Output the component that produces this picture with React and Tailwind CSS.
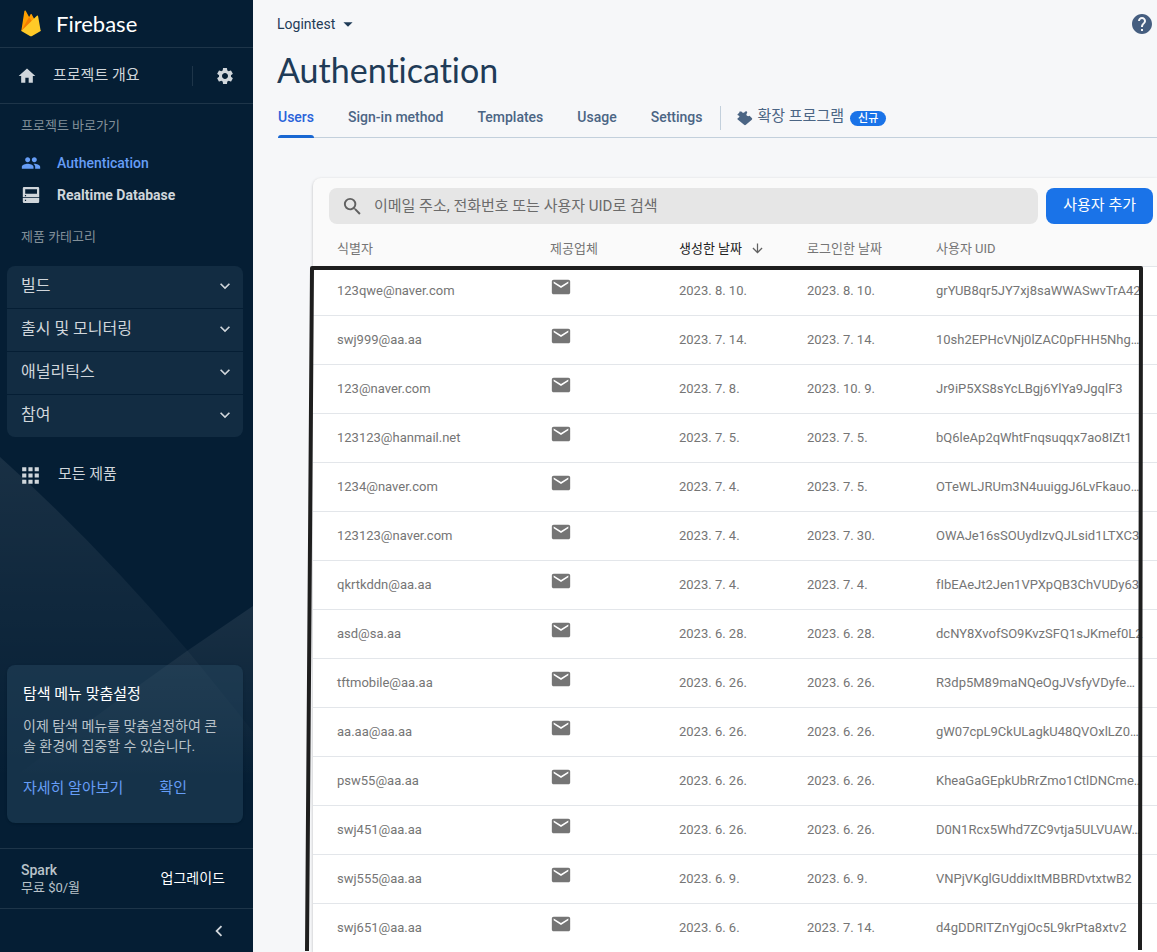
import React from "react";
import {
  MdHome, MdSettings, MdPeople, MdEmail, MdSearch, MdArrowDownward, MdHelp,
  MdArrowDropDown, MdExpandMore, MdApps, MdChevronLeft,
} from "react-icons/md";

const users = [
  ["123qwe@naver.com", "2023. 8. 10.", "2023. 8. 10.", "grYUB8qr5JY7xj8saWWASwvTrA42"],
  ["swj999@aa.aa", "2023. 7. 14.", "2023. 7. 14.", "10sh2EPHcVNj0lZAC0pFHH5Nhg…"],
  ["123@naver.com", "2023. 7. 8.", "2023. 10. 9.", "Jr9iP5XS8sYcLBgj6YlYa9JgqlF3"],
  ["123123@hanmail.net", "2023. 7. 5.", "2023. 7. 5.", "bQ6leAp2qWhtFnqsuqqx7ao8IZt1"],
  ["1234@naver.com", "2023. 7. 4.", "2023. 7. 5.", "OTeWLJRUm3N4uuiggJ6LvFkauo…"],
  ["123123@naver.com", "2023. 7. 4.", "2023. 7. 30.", "OWAJe16sSOUydIzvQJLsid1LTXC3"],
  ["qkrtkddn@aa.aa", "2023. 7. 4.", "2023. 7. 4.", "fIbEAeJt2Jen1VPXpQB3ChVUDy63"],
  ["asd@sa.aa", "2023. 6. 28.", "2023. 6. 28.", "dcNY8XvofSO9KvzSFQ1sJKmef0L2"],
  ["tftmobile@aa.aa", "2023. 6. 26.", "2023. 6. 26.", "R3dp5M89maNQeOgJVsfyVDyfe…"],
  ["aa.aa@aa.aa", "2023. 6. 26.", "2023. 6. 26.", "gW07cpL9CkULagkU48QVOxlLZ0…"],
  ["psw55@aa.aa", "2023. 6. 26.", "2023. 6. 26.", "KheaGaGEpkUbRrZmo1CtlDNCme…"],
  ["swj451@aa.aa", "2023. 6. 26.", "2023. 6. 26.", "D0N1Rcx5Whd7ZC9vtja5ULVUAW…"],
  ["swj555@aa.aa", "2023. 6. 9.", "2023. 6. 9.", "VNPjVKglGUddixItMBBRDvtxtwB2"],
  ["swj651@aa.aa", "2023. 6. 6.", "2023. 7. 14.", "d4gDDRITZnYgjOc5L9krPta8xtv2"],
];

const categories = ["빌드", "출시 및 모니터링", "애널리틱스", "참여"];
const tabs = ["Users", "Sign-in method", "Templates", "Usage", "Settings"];

function FirebaseLogo() {
  return (
    <svg viewBox="0 0 20 27" className="h-[27px] w-5" aria-hidden="true">
      <path d="M0.3 21 3.4 1c.1-.7 1-.8 1.3-.3l3.4 6.2L9.500 4.400c.3-.6 1-.6 1.300 0L19.700 21Z" fill="#ffa000" />
      <path d="M12 13 8.100 6.900 0.300 21Z" fill="#f57c00" />
      <path d="m0.300 21 15.600-15.200c.4-.4 1.100-.2 1.200.4L19.700 21l-8.600 5c-.7.400-1.500.400-2.200 0Z" fill="#ffca28" />
    </svg>
  );
}

function DatabaseIcon() {
  return (
    <svg viewBox="0 0 18 18" className="h-[18px] w-[18px]" aria-hidden="true">
      <path
        fillRule="evenodd"
        fill="currentColor"
        d="M2 1h14a1.200 1.200 0 0 1 1.200 1.200v9H0.800v-9A1.200 1.200 0 0 1 2 1ZM3.200 3.300v4.400h11.800V3.300ZM2.900 9v1.200h1.200V9ZM0.800 12h16.400v3.800a1.200 1.200 0 0 1-1.200 1.200H2a1.200 1.200 0 0 1-1.200-1.200ZM2.900 13.800v1.200h1.200v-1.200Z"
      />
    </svg>
  );
}

function PuzzleIcon() {
  return (
    <svg viewBox="0 0 16 16" className="h-4 w-4" aria-hidden="true">
      <path
        fill="currentColor"
        d="M2.600 1.600 4.200 1.400c.7 0 .8 1.200 1.700 1.400.9.200 1.600-.4 2-1 .5-.6 1.300-.8 1.900-.2.600.6.500 1.300 0 1.900-.6.800-.5 1.700.2 2.300.8.700 1.800.5 2.500 0l2.300 2.200c.6.500.6 1.200 0 1.700l-5.900 5.100c-.6.500-1.200.5-1.800 0L.700 9.600c-.5-.5-.4-1 .1-1.400.8-.6 1.500-.7 1.600-1.600.1-.9-.8-1-1.500-1.400-.6-.4-.5-1 0-1.300.8-.5 1.400-.6 1.700-2.300Z"
      />
    </svg>
  );
}

function SidebarArt() {
  return (
    <svg viewBox="0 0 253 392" preserveAspectRatio="none" className="absolute bottom-0 left-0 h-[392px] w-full" aria-hidden="true">
      <defs>
        <linearGradient id="fade" x1="0" y1="0" x2="0" y2="1">
          <stop offset="0" stopColor="#fff" stopOpacity=".08" />
          <stop offset="1" stopColor="#fff" stopOpacity="0" />
        </linearGradient>
      </defs>
      <path d="M0 1Q95 86 187 194Q225 240 253 276V325H0Z" fill="url(#fade)" />
      <path d="M253 150L187 195L110 250L0 332H253Z" fill="url(#fade)" />
    </svg>
  );
}

function Sidebar() {
  return (
    <nav className="relative flex w-[253px] shrink-0 flex-col bg-[#051e34] text-[#d0d6db]">
      <header className="flex h-12 items-center gap-[15px] border-b border-[#1e3549] pl-[21px]">
        <FirebaseLogo />
        <span className="font-[Lato] text-[22px] leading-7 text-white">Firebase</span>
      </header>
      <div className="flex h-14 items-center border-b border-[#1e3549] pl-[17px]">
        <a href="#overview" className="flex grow items-center gap-4">
          <MdHome size={20} />
          <span className="pb-0.5 text-[15px] leading-5">프로젝트 개요</span>
        </a>
        <button type="button" aria-label="설정" className="flex h-5 items-center border-l border-[#1e3549] pr-[18px] pl-[22px]">
          <MdSettings size={20} />
        </button>
      </div>
      <h2 className="mt-3 pl-[21px] text-[13px] leading-5 text-[#829099]">프로젝트 바로가기</h2>
      <div className="mt-[11px] flex flex-col text-sm font-medium">
        <a href="#auth" className="flex h-8 items-center gap-4 pl-[21px] text-[#669df6]">
          <MdPeople size={20} />
          Authentication
        </a>
        <a href="#rtdb" className="flex h-8 items-center gap-[17px] pl-[22px] font-bold">
          <DatabaseIcon />
          Realtime Database
        </a>
      </div>
      <h2 className="mt-4 pl-[21px] text-[13px] leading-5 text-[#829099]">제품 카테고리</h2>
      <div className="relative z-10 mt-[19px] ml-[7px] mr-2.5 divide-y divide-[#051e34] overflow-hidden rounded-lg bg-[#122c42]">
        {categories.map((name) => (
          <button key={name} type="button" className="flex h-[43px] w-full items-center justify-between pr-2 pb-0.5 pl-3.5 text-base last:h-[42px]">
            <span className="leading-5">{name}</span>
            <MdExpandMore size={20} />
          </button>
        ))}
      </div>
      <div className="relative flex grow flex-col justify-between">
        <SidebarArt />
        <a href="#all" className="relative mt-5 flex h-9 items-center gap-[15px] pl-[18px] text-[15px]">
          <MdApps size={25} />
          <span className="pb-0.5 leading-5">모든 제품</span>
        </a>
        <section className="relative mt-4 mr-2.5 mb-[25px] ml-[7px] rounded-lg bg-[#2c5068]/40 px-4 pt-[19px] pb-[23px] shadow-sm">
          <h3 className="text-[15px] leading-5 text-white">탐색 메뉴 맞춤설정</h3>
          <p className="mt-3 text-sm leading-5 break-all text-[#bac3ca]">이제 탐색 메뉴를 맞춤설정하여 콘솔 환경에 집중할 수 있습니다.</p>
          <div className="mt-5 flex gap-9 text-[15px] leading-6 text-[#669df6]">
            <a href="#more">자세히 알아보기</a>
            <button type="button">확인</button>
          </div>
        </section>
      </div>
      <div className="flex h-[60px] items-center justify-between border-t border-[#1e3549] pr-7 pl-[21px]">
        <div className="text-[13px] leading-[18px] text-[#bac3ca]">
          <div className="text-sm leading-[18px] font-medium">Spark</div>
          무료 $0/월
        </div>
        <button type="button" className="pb-0.5 text-sm text-white">업그레이드</button>
      </div>
      <div className="flex h-11 items-center justify-end border-t border-[#1e3549] pr-[23px]">
        <button type="button" aria-label="메뉴 접기"><MdChevronLeft size={22} /></button>
      </div>
    </nav>
  );
}

function UsersTable() {
  return (
    <div className="relative">
      <table className="w-full table-fixed border-collapse text-left text-[13px]">
        <colgroup>
          <col className="w-[237px]" />
          <col className="w-[129px]" />
          <col className="w-32" />
          <col className="w-[129px]" />
          <col />
        </colgroup>
        <thead className="text-[#757575]">
          <tr className="h-[34px]">
            <th className="pl-6 font-normal">식별자</th>
            <th className="font-normal">제공업체</th>
            <th className="font-normal text-[#212121]">
              <button type="button" className="flex items-center gap-2">
                생성한 날짜
                <MdArrowDownward size={15} className="text-[#616161]" />
              </button>
            </th>
            <th className="font-normal">로그인한 날짜</th>
            <th className="font-normal">사용자 UID</th>
          </tr>
        </thead>
        <tbody className="bg-white text-[#757575]">
          {users.map(([id, created, signedIn, uid]) => (
            <tr key={id} className="h-[49px] border-t border-[#e3e6ea]">
              <td className="pl-6">{id}</td>
              <td><MdEmail size={22} className="mb-2" aria-label="이메일" /></td>
              <td>{created}</td>
              <td>{signedIn}</td>
              <td className="whitespace-nowrap">{uid}</td>
            </tr>
          ))}
        </tbody>
      </table>
      <div className="pointer-events-none absolute -left-2 right-0 top-[34px] bottom-0 pr-[13px]">
        <svg viewBox="0 0 839 686" preserveAspectRatio="none" className="h-full w-full overflow-visible" aria-hidden="true">
          <path d="M2 685C2 500 5 300 7 2H836C836 300 837 500 835 684" fill="none" stroke="#1e1e1e" strokeWidth="4" strokeLinejoin="round" />
        </svg>
      </div>
    </div>
  );
}

export default function App() {
  return (
    <div className="flex min-h-screen bg-[#f6f7f9] font-[Roboto,'Noto_Sans_CJK_KR',sans-serif]">
      <Sidebar />
      <main className="flex min-w-0 grow flex-col overflow-hidden">
        <div className="flex h-[47px] items-center justify-between pr-[3px] pl-6 text-[#1f3b57]">
          <button type="button" className="flex items-center gap-0.5 text-sm">
            Logintest
            <MdArrowDropDown size={22} />
          </button>
          <button type="button" aria-label="도움말" className="text-[#455e80]"><MdHelp size={24} /></button>
        </div>
        <h1 className="pl-6 font-[Lato] text-[34px] leading-[46px] text-[#1f3b57] [font-variant-ligatures:none]">Authentication</h1>
        <div className="mt-0.5 ml-[25px] flex h-[43px] items-stretch border-b border-[#c3d0dc] text-sm font-medium text-[#4b6584]">
          <nav className="flex gap-[34px]">
            {tabs.map((tab, i) => (
              <a key={tab} href={"#" + tab} className={i === 0 ? "relative pt-3 text-[#2962d9]" : "pt-3"}>
                {tab}
                {i === 0 && <span className="absolute inset-x-0 -bottom-px h-[3px] rounded-t bg-[#1967d2]" />}
              </a>
            ))}
          </nav>
          <a href="#extensions" className="mt-[11px] ml-[18px] flex h-6 items-center gap-1 border-l border-[#c3d0dc] pl-4 text-[15px] font-normal">
            <PuzzleIcon />
            <span className="pb-0.5">확장 프로그램</span>
            <span className="ml-0.5 rounded-full bg-[#1a73e8] px-2 text-[11px] leading-[15px] font-medium text-white">신규</span>
          </a>
        </div>
        <section className="mt-10 ml-15 grow rounded-tl-lg bg-[#fafafa] shadow-[0_1px_3px_rgba(0,0,0,0.25)]">
          <div className="flex gap-2 pt-2.5 pr-1 pb-2 pl-4">
            <label className="flex h-9 grow items-center gap-2.5 rounded-lg bg-[#e6e6e6] pl-3 text-[#616161]">
              <MdSearch size={23} />
              <input
                type="search"
                aria-label="사용자 검색"
                placeholder="이메일 주소, 전화번호 또는 사용자 UID로 검색"
                className="grow bg-transparent text-[15px] outline-none placeholder:text-[#6b6b6b]"
              />
            </label>
            <button type="button" className="h-9 rounded-lg bg-[#1a73e8] px-[17px] pb-0.5 text-[15px] text-white">사용자 추가</button>
          </div>
          <UsersTable />
        </section>
      </main>
    </div>
  );
}
